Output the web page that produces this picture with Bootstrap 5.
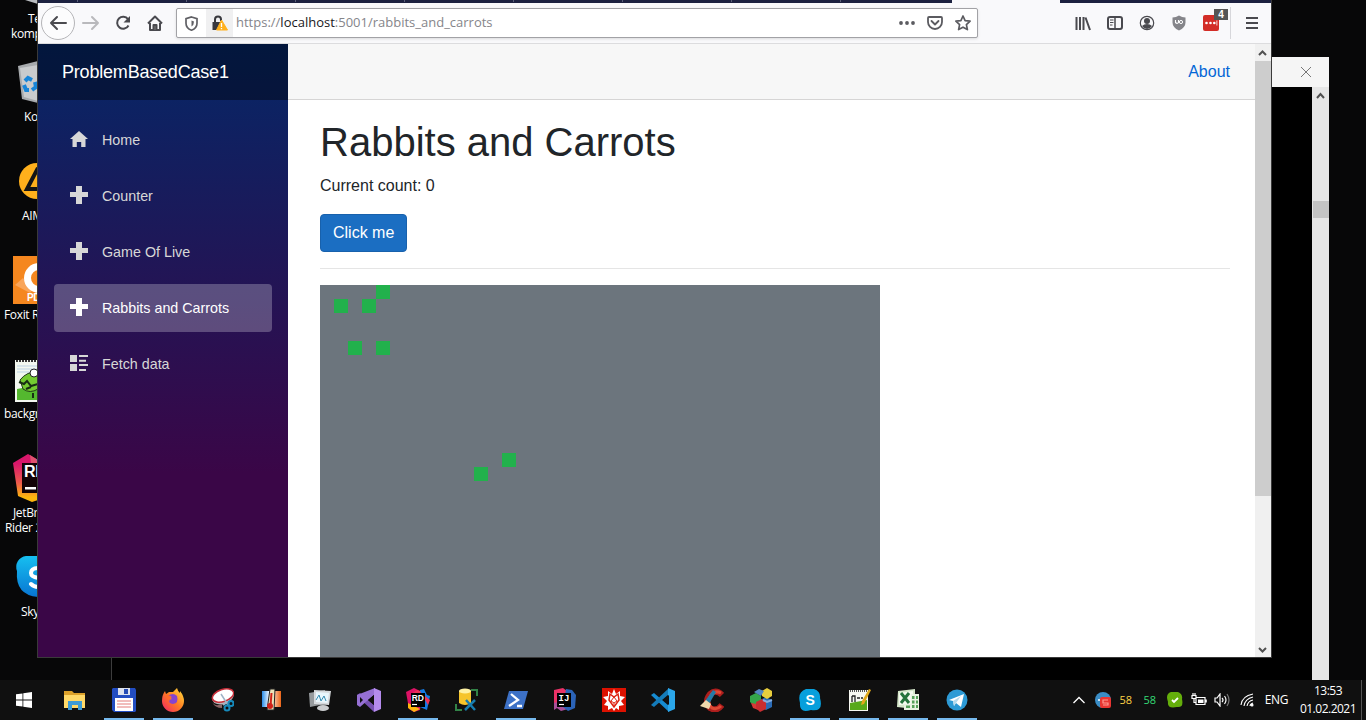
<!DOCTYPE html>
<html lang="en">
<head>
<meta charset="utf-8">
<meta name="viewport" content="width=device-width, initial-scale=1">
<title>ProblemBasedCase1</title>
<link href="https://cdn.jsdelivr.net/npm/bootstrap@5.3.0/dist/css/bootstrap.min.css" rel="stylesheet">
<style>
body{width:1366px;height:720px;background:#060607;font-family:"Liberation Sans",Arial,sans-serif;color:#212529;letter-spacing:0}
svg{display:block;flex:none}
.ui-font{font-family:"Open Sans","Noto Sans",sans-serif}
.desk{height:680px;background:#070708}
/* desktop shortcuts */
.shortcuts{width:38px}
.shortcut{height:99px;font-size:12px;line-height:15px;color:#fff;white-space:nowrap;letter-spacing:-.35px}
.shortcut.cut{height:58px}
.shortcut svg{margin-bottom:3px}
/* console window behind the browser */
.console{left:111px;top:57px;width:1218px;height:623px;background:#000;border-left:1px solid #3c3c3c}
.console-title{height:30px;background:#f5f5f5;padding-right:17px}
.console-scroll{width:17px;background:#e6e6e6}
.console-thumb{height:17px;margin:98px 0 0 1px;background:#c4c4c4}
/* browser */
.browser{left:37px;top:0;width:1235px;height:658px;border:1px solid #3a3a3a;border-top:0;background:#fff}
.tabstrip{height:3px;background:#1c2140;flex:none}
.tabstrip i{width:109px;height:2px;border-right:1px solid #5a5e78}
.tabstrip .first{width:40px}
.tabstrip .current{width:108px;height:3px;background:#f9f9fb;border:0}
.toolbar{height:41px;flex:none;background:#f9f9fb;border-bottom:1px solid #dcdcde}
.back{width:34px;height:34px;border:1px solid #b5b5b8;border-radius:50%;background:#fcfcfd;margin-left:3px}
.urlbar{width:802px;height:30px;border:1px solid #a2a2a6;border-radius:2px;background:#fff;box-shadow:0 1px 3px rgba(0,0,0,.12);font-size:13px;color:#85858a}
.lockbox{width:27px;height:28px;background:#f0f0f1;margin-right:3px}
.urlbar b{font-weight:400;color:#18181b}
.sep{width:1px;height:32px;background:#d7d7db}
.count{left:11px;top:-6px;width:14px;height:11px;background:#555;color:#fff;font:bold 10px/11px "Liberation Sans",sans-serif}
/* page */
.sidebar{width:250px;background:linear-gradient(180deg,#052767 0%,#3a0647 70%)}
.brand-row{height:56px;background:rgba(0,0,0,.4);color:#fff;font-size:18px;letter-spacing:-.2px;padding-left:24px}
.side-link{height:48px;border-radius:4px;color:#d7d7d7;font-size:14.3px;padding:2px 0 0 16px;text-decoration:none}
.side-link svg{margin:-5px 14px 0 0}
.side-link.active{background:rgba(255,255,255,.25);color:#fff}
.top-row{height:56px;background:#f7f7f7;border-bottom:1px solid #d6d5d5;padding-right:25px}
.about{color:#0366d6;text-decoration:none}
.article{padding:17.6px 25px 0 32px}
.article h1{font-size:40px}
.btn-click{background:#1b6ec2;border-color:#1861ac;color:#fff;border-radius:4px}
.board{width:560px;height:560px;display:grid;grid-template:repeat(40,14px)/repeat(40,14px);background:#6c757d}
.board i{background:#22b14c}
.scroller{width:16px;background:#f0f0f0}
.thumb{height:435px;background:#cdcdcd}
/* taskbar */
.taskbar{height:40px;background:#101010;color:#fff}
.task{width:49px;height:40px;padding-right:1px}
.start{width:48px;height:40px;margin-right:3px}
.task.open::after{content:"";position:absolute;left:4px;bottom:0;width:40px;height:2px;background:#76b9ed}
.tray{font-size:12px;margin-left:auto}
.clock{width:62px;line-height:18px;letter-spacing:-.5px}
.temp{font-size:11px;width:24px;text-align:center}
</style>
</head>
<body class="overflow-hidden">
<div class="desk position-relative overflow-hidden">
  <div class="shortcuts ui-font overflow-hidden">
    <div class="shortcut cut"><svg width="38" height="8"><path d="M25 0h13v4z" fill="#b9bcc0"/></svg><div style="padding-left:28px">Te</div><div style="padding-left:11px">komp</div></div>
    <div class="shortcut"><svg width="38" height="48"><path d="M18 8l20-5v42l-16-4z" fill="#a7aaad"/><path d="M20 10l18-3v36l-14-4z" fill="#c9cbcd"/><g fill="none" stroke="#1885d8" stroke-width="4"><path d="M25 23l3-3 4 2M24 27l2 5h3M35 24l1 5-4 3"/></g></svg><div style="padding-left:24px">Ko</div></div>
    <div class="shortcut"><svg width="38" height="48"><circle cx="37" cy="24" r="18" fill="#ffb01c"/><path d="M38 11L27 32h11" fill="none" stroke="#151515" stroke-width="4"/></svg><div style="padding-left:22px">AIM</div></div>
    <div class="shortcut"><svg width="38" height="48"><path d="M13 0h25v48H13z" fill="#f5871f"/><path d="M15 29l8-7 10 12-3 3z" fill="#f9a55a"/><circle cx="39" cy="22" r="11.500" fill="none" stroke="#fff" stroke-width="7"/><text x="27" y="45" font-family="Liberation Sans" font-weight="bold" font-size="10" fill="#fff">PD</text></svg><div style="padding-left:4px">Foxit R</div></div>
    <div class="shortcut"><svg width="38" height="48"><path d="M15 5h23v42H15z" fill="#f3f8f0"/><path d="M16 6h22" stroke="#333" stroke-width="2" stroke-dasharray="2 1"/><path d="M17 11h21M17 14h21M17 17h21" stroke="#bdd3e5"/><path d="M17 34l21-4v15H17z" fill="#54b82f"/><path d="M20 25q7-9 18-8v17q-8 5-15 0z" fill="#74cb31" stroke="#203a18"/><circle cx="34" cy="18" r="4" fill="#fff" stroke="#222"/><path d="M19 27l5 2 3-3 4 5 7-2M26 34l5-2M33 38v5" fill="none" stroke="#182d13" stroke-width="2"/></svg><div style="padding-left:4px">backgr</div></div>
    <div class="shortcut"><svg width="38" height="48"><defs><linearGradient id="rider" x1="0" y1="0" x2="0" y2="1"><stop offset=".2" stop-color="#d8176b"/><stop offset=".6" stop-color="#ed5a4c"/><stop offset=".9" stop-color="#fdb60d"/></linearGradient></defs><path d="M13 9L28 0l10 6v40l-6 2-14-6z" fill="url(#rider)"/><path d="M30 1l8 5v7l-7-4z" fill="#e0526e"/><path d="M36 5l2 1v3z" fill="#725fe0"/><path d="M22 9h16v30H22z" fill="#130306"/><text x="24" y="23" font-family="Liberation Sans" font-weight="bold" font-size="16" fill="#fff">RD</text><path d="M25 33h11v2.500H25z" fill="#fff"/></svg><div style="padding-left:13px">JetBr</div><div style="padding-left:5px">Rider 2</div></div>
    <div class="shortcut"><svg width="38" height="48"><defs><linearGradient id="sky" x1="0" y1="0" x2="0" y2="1"><stop stop-color="#16bff0"/><stop offset="1" stop-color="#0875d2"/></linearGradient></defs><path d="M38 3h-12a11 11 0 00-9 15q-2 24 21 26z" fill="url(#sky)"/><path d="M39 15q-8 0-8 5 0 4 8 5M31 31q3 3 8 3" fill="none" stroke="#fff" stroke-width="4" stroke-linecap="round"/></svg><div style="padding-left:21px">Sky</div></div>
  </div>

  <div class="console position-absolute d-flex flex-column">
    <div class="console-title d-flex align-items-center justify-content-end"><svg width="12" height="12" fill="none" stroke="#777"><path d="M1 1l10 10M11 1L1 11"/></svg></div>
    <div class="flex-fill d-flex justify-content-end"><div class="console-scroll"><svg width="17" height="16" fill="none" stroke="#505050" stroke-width="2"><path d="M5 11l3.500-4 3.500 4"/></svg><div class="console-thumb"></div></div></div>
  </div>

  <div class="browser position-absolute d-flex flex-column">
    <div class="tabstrip d-flex"><i class="first"></i><i></i><i></i><i></i><i></i><i></i><i></i><i></i><i style="width:111px;border:0"></i><i class="current"></i></div>
    <div class="toolbar d-flex align-items-center">
      <div class="back d-flex align-items-center justify-content-center"><svg width="18" height="16" fill="none" stroke="#4a4a4f" stroke-width="2" stroke-linecap="round" stroke-linejoin="round"><path d="M17 8H2M8 2L2 8l6 6"/></svg></div>
      <svg style="margin-left:7px" width="18" height="16" fill="none" stroke="#b9b9bc" stroke-width="2" stroke-linecap="round" stroke-linejoin="round"><path d="M1 8h15M10 2l6 6-6 6"/></svg>
      <svg style="margin-left:15px" width="16" height="16" fill="none" stroke="#4a4a4f" stroke-width="2"><path d="M13.500 10.500A6 6 0 1113 4.200"/><path d="M15 1v6.500H8.500z" fill="#4a4a4f" stroke="none"/></svg>
      <svg style="margin-left:16px" width="16" height="16" fill="none" stroke="#4a4a4f" stroke-width="2" stroke-linejoin="round"><path d="M1 8.500L8 1.500l7 7M3 8v7h10V8"/><path d="M6.500 15v-5h3v5" fill="#777"/></svg>
      <div class="urlbar ui-font d-flex align-items-center" style="margin-left:13px">
        <svg style="margin:0 8px 0 8px" width="13" height="15" fill="none" stroke="#606065" stroke-width="1.700"><path d="M6.500 1l5.500 1.700v4.500q0 5-5.500 7-5.500-2-5.500-7V2.700z"/><path d="M6.500 4.500v6q2.500-1.500 2.500-5z" fill="#606065" stroke="none"/></svg>
        <div class="lockbox d-flex align-items-center justify-content-center" ><svg width="17" height="17"><path d="M4 8V4.500a3 3 0 016 0V6" fill="none" stroke="#38383d" stroke-width="2"/><path d="M1.500 7h9v8h-9z" fill="#38383d"/><path d="M10.500 5L16.500 15h-11z" fill="#ffb01d" stroke="#ffb01d" stroke-linejoin="round"/><path d="M10.500 8v4M10.500 13v1.200" stroke="#fff" stroke-width="1.300"/></svg></div>
        <span class="url-text">https://<b>localhost</b>:5001/rabbits_and_carrots</span>
        <svg class="ms-auto" width="16" height="4" fill="#5b5b60"><circle cx="2" cy="2" r="1.900"/><circle cx="8" cy="2" r="1.900"/><circle cx="14" cy="2" r="1.900"/></svg>
        <svg style="margin-left:12px" width="16" height="14" fill="none" stroke="#5b5b60" stroke-width="1.800" stroke-linecap="round" stroke-linejoin="round"><path d="M2 1h12q1 0 1 1v4a7 7 0 01-14 0V2q0-1 1-1zM4.500 5L8 8.500 11.500 5"/></svg>
        <svg style="margin:0 6px 0 12px" width="16" height="16" fill="none" stroke="#5b5b60" stroke-width="1.700" stroke-linejoin="round"><path d="M8 1l2.100 4.600 5 .6-3.700 3.400 1 5L8 12.200 3.600 14.600l1-5L.9 6.200l5-.6z"/></svg>
      </div>
      <svg style="margin-left:97px" width="16" height="15" fill="none" stroke="#4a4a4f" stroke-width="2"><path d="M1.500 1v13M5 1v13M8.500 1v13M10.500 1.500l4.500 12.500"/></svg>
      <svg style="margin-left:16px" width="16" height="14" fill="none" stroke="#4a4a4f" stroke-width="2"><rect x="1" y="1" width="14" height="12" rx="2"/><path d="M8 1v12" stroke-width="1.500"/><path d="M3 4h3.500M3 6.500h3.500M3 9h2.500" stroke-width="1"/></svg>
      <svg style="margin-left:16px" width="16" height="16"><circle cx="8" cy="8" r="6.700" fill="none" stroke="#4a4a4f" stroke-width="1.200"/><circle cx="8" cy="6" r="3" fill="#4a4a4f"/><path d="M3 11q2-2 5-2t5 2q-2 3-5 3t-5-3z" fill="#4a4a4f"/></svg>
      <svg style="margin-left:16px" width="16" height="16"><path d="M8 .5q3 2 6.500 2v5q0 5-6.500 8-6.500-3-6.500-8v-5q3.500 0 6.500-2z" fill="#85858a"/><path d="M4.500 5v2.500q1.700 1.800 3 0V5" fill="none" stroke="#fff" stroke-width="1.100"/><circle cx="10" cy="7" r="1.600" fill="none" stroke="#fff"/></svg>
      <div class="position-relative" style="margin-left:16px"><svg width="16" height="16"><rect width="16" height="16" rx="2" fill="#d32d27"/><g fill="#fff"><circle cx="3.500" cy="8" r="1.300"/><circle cx="7.500" cy="8" r="1.300"/><circle cx="11.300" cy="8" r="1.300"/><path d="M13.500 5.500h.8v5h-.8z"/></g></svg><span class="count position-absolute text-center">4</span></div>
      <div class="sep" style="margin-left:11px"></div>
      <svg style="margin-left:15px" width="12" height="12" stroke="#4a4a4f" stroke-width="2"><path d="M0 1h12M0 6h12M0 11h12"/></svg>
    </div>
    <div class="d-flex flex-fill overflow-hidden" style="min-height:0">
      <nav class="sidebar flex-shrink-0">
        <div class="brand-row d-flex align-items-center">ProblemBasedCase1</div>
        <div class="d-flex flex-column gap-2 px-3 pt-3">
          <a class="side-link d-flex align-items-center" href="#"><svg width="18" height="18" fill="currentColor"><path d="M9 1L0 9h2.500v8h4.300v-5h4.400v5h4.300V9H18z"/></svg>Home</a>
          <a class="side-link d-flex align-items-center" href="#"><svg width="18" height="18" fill="currentColor"><path d="M6 0h6v6h6v5h-6v7H6v-7H0V6h6z"/></svg>Counter</a>
          <a class="side-link d-flex align-items-center" href="#"><svg width="18" height="18" fill="currentColor"><path d="M6 0h6v6h6v5h-6v7H6v-7H0V6h6z"/></svg>Game Of Live</a>
          <a class="side-link active d-flex align-items-center" href="#"><svg width="18" height="18" fill="currentColor"><path d="M6 0h6v6h6v5h-6v7H6v-7H0V6h6z"/></svg>Rabbits and Carrots</a>
          <a class="side-link d-flex align-items-center" href="#"><svg width="18" height="18" fill="currentColor"><path d="M0 1h7v7H0zM0 10h7v7H0zM9 1h9v2H9zM9 5.700h7v2H9zM9 10h9v2H9zM9 15h7v2H9z"/></svg>Fetch data</a>
        </div>
      </nav>
      <main class="flex-fill overflow-hidden">
        <div class="top-row d-flex align-items-center justify-content-end"><a class="about" href="#">About</a></div>
        <div class="article">
          <h1 class="mb-2">Rabbits and Carrots</h1>
          <p class="mb-3">Current count: 0</p>
          <button class="btn btn-click">Click me</button>
          <hr class="my-3" style="opacity:.1;border-color:#000">
          <div class="board">
            <i style="grid-area:1/5"></i><i style="grid-area:2/2"></i><i style="grid-area:2/4"></i><i style="grid-area:5/3"></i><i style="grid-area:5/5"></i><i style="grid-area:13/14"></i><i style="grid-area:14/12"></i>
          </div>
        </div>
      </main>
      <div class="scroller d-flex flex-column flex-shrink-0">
        <svg width="16" height="17" fill="none" stroke="#505050" stroke-width="2"><path d="M4 11l3.500-3.500L11 11"/></svg>
        <div class="thumb"></div>
        <svg class="mt-auto" width="16" height="17" fill="none" stroke="#505050" stroke-width="2"><path d="M4 8l3.500 3.500L11 8"/></svg>
      </div>
    </div>
  </div>
</div>

<div class="taskbar d-flex ui-font">
  <div class="start d-flex align-items-center justify-content-center"><svg width="16" height="16" fill="#fff"><path d="M0 2.300l6.500-.9v6.200H0zM7.300 1.300L16 0v7.600H7.300zM0 8.400h6.500v6.200L0 13.700zM7.300 8.400H16V16l-8.700-1.300z"/></svg></div>
  <div class="task d-flex align-items-center justify-content-center"><svg width="24" height="24"><path d="M1 3h8l2 2h11v15H1z" fill="#dca12a"/><path d="M1 7h21v13H1z" fill="#ffd968"/><path d="M5 13h14v9h-4v-5H9v5H5z" fill="#3c9bd6"/></svg></div>
  <div class="task open position-relative d-flex align-items-center justify-content-center"><svg width="24" height="24"><path d="M0 1l1-1h22l1 2v21l-1 1H2l-2-2z" fill="#224dc2"/><path d="M6 0h12v7H6z" fill="#dce2ef"/><path d="M12 1h4v5h-4z" fill="#244bb5"/><path d="M3 10h18v13H3z" fill="#fff"/><path d="M5 13h14M5 16h14M5 19h14" stroke="#e37a79"/></svg></div>
  <div class="task open position-relative d-flex align-items-center justify-content-center"><svg width="24" height="24"><defs><linearGradient id="fox" x1="1" y1="0" x2="0" y2="1"><stop stop-color="#ffe43d"/><stop offset=".5" stop-color="#ff7a22"/><stop offset="1" stop-color="#f0206b"/></linearGradient></defs><path d="M12 4l4-4q1 4 3 5V3q4 5 4 10a11 11 0 01-22 0Q1 7 4 3l1 3 3-2z" fill="url(#fox)"/><path d="M7 8q5-4 9 0 2 7-4 8-5-1-4-4l3-1z" fill="#8544cf"/><path d="M4 8q4-2 7 1l-3 2 1 3" fill="#ff6b2b"/></svg></div>
  <div class="task d-flex align-items-center justify-content-center"><svg width="24" height="24"><ellipse cx="13" cy="9" rx="11" ry="7" transform="rotate(-18 13 9)" fill="#b7b7bb"/><ellipse cx="13" cy="7.500" rx="11" ry="6" transform="rotate(-18 13 7.500)" fill="#fff" stroke="#c72e39" stroke-width="1.500"/><path d="M2 14q3 5 10 2v4q-7 0-10-6z" fill="#866"/><path d="M11 6l7 11M21 12l-8 5" stroke="#9eb3c6" stroke-width="1.500"/><circle cx="17" cy="20" r="2.500" fill="none" stroke="#168abb" stroke-width="2"/><circle cx="21" cy="15.500" r="2.500" fill="none" stroke="#168abb" stroke-width="2"/></svg></div>
  <div class="task d-flex align-items-center justify-content-center"><svg width="24" height="24"><defs><linearGradient id="heat"><stop stop-color="#2b8ee8"/><stop offset=".4" stop-color="#fff"/><stop offset="1" stop-color="#ed6517"/></linearGradient></defs><path d="M3 3h19v16H3z" fill="url(#heat)"/><path d="M11 1h5l-1 21H8z" fill="#ece3b9" stroke="#222"/><path d="M12.500 5l-1 13" stroke="#d12118" stroke-width="2"/><circle cx="11" cy="18" r="3" fill="#d12118"/></svg></div>
  <div class="task d-flex align-items-center justify-content-center"><svg width="24" height="24"><path d="M1 5l16-3v14L2 19z" fill="#969a9d"/><path d="M6 2l17 1-2 14-15-1z" fill="#d7dadd"/><path d="M8 4l13 1-1.500 10L8 14z" fill="#e9f6fc"/><path d="M8 12l3-5 2 6 3-5 2 5" fill="none" stroke="#368bb1"/><ellipse cx="15" cy="20" rx="6" ry="3" fill="#cbcdcf"/></svg></div>
  <div class="task d-flex align-items-center justify-content-center"><svg width="24" height="24"><path d="M0 7l3-2 15 13-1 6L0 8z" fill="#7551b0"/><path d="M0 7v10l3 2L18 6V0z" fill="#9670d4"/><path d="M3 9v6l3-3z" fill="#101010"/><path d="M17 0l7 3v18l-7 3z" fill="#b48bed"/><path d="M17 7v10l-6-5z" fill="#101010"/></svg></div>
  <div class="task open position-relative d-flex align-items-center justify-content-center"><svg width="24" height="24"><path d="M0 4l8-4 8 4-2 18-6 2-5-3z" fill="#dd1265"/><path d="M14 2l4-1 3 6 3 1-3 14-7-3z" fill="#147be5"/><path d="M2 15l12 6-6 3-6-4z" fill="#fdb60d"/><path d="M14 3l-3-1-6 4 14 2 5 4-2 5z" fill="#ee3157"/><path d="M5 5h14v14H5z"/><text x="5.700" y="12.500" font-family="Liberation Sans" font-weight="bold" font-size="8.500" fill="#fff">RD</text><path d="M6 16.500h5" stroke="#fff" stroke-width="1.200"/></svg></div>
  <div class="task d-flex align-items-center justify-content-center"><svg width="24" height="24"><path d="M4 3v12q6 4 12 0V3z" fill="#f6c52b"/><ellipse cx="10" cy="3" rx="6" ry="2.500" fill="#fff2a3"/><path d="M16 2h6v6M7 22H1v-6" fill="none" stroke="#328347" stroke-width="2"/><path d="M11 12l9 10M20 12L10 22" stroke="#167db0" stroke-width="2.500"/></svg></div>
  <div class="task open position-relative d-flex align-items-center justify-content-center"><svg width="24" height="24"><path d="M5 3h19l-5 18H0z" fill="#3d71c6"/><path d="M7 6l7 6-9 6M13 18h5" fill="none" stroke="#fff" stroke-width="2.300"/></svg></div>
  <div class="task d-flex align-items-center justify-content-center"><svg width="24" height="24"><path d="M1 2l9-2 4 3-6 17-7-3z" fill="#e93267"/><path d="M1 15l7-2 7 8-7 2-4-3-3 2z" fill="#a94f9a"/><path d="M13 1l6 1 4 5-1 13-7 3-5-4z" fill="#2b63b7"/><path d="M4 5h14v14H4z"/><text x="5.500" y="12.500" font-family="Liberation Mono" font-weight="bold" font-size="9" fill="#fff">IJ</text><path d="M6 16.500h5" stroke="#fff" stroke-width="1.200"/></svg></div>
  <div class="task d-flex align-items-center justify-content-center"><svg width="24" height="24"><path d="M0 0h24v24H0z" fill="#dd1100"/><path d="M12 1l2 5 4-3v5l5 1-4 4 3 4-5 1v4l-3-2-2 3-2-3-4 2v-4l-4-1 3-4-4-4 5-1V3l4 3z" fill="#fff"/><path d="M8 6l4 3 4-3 1 6-5 7-5-7z" fill="none" stroke="#d21" stroke-width="1.500"/><path d="M12 9l-3 4 3 2 3-2zM12 15v4" fill="none" stroke="#d21"/></svg></div>
  <div class="task d-flex align-items-center justify-content-center"><svg width="24" height="24"><path d="M0 7l3-2 15 13v6z" fill="#168bd1"/><path d="M0 17l3 2L18 6V0z" fill="#147bb9"/><path d="M17 0l7 3v18l-7 3z" fill="#2ba6ea"/><path d="M18 7v10l-6-5z" fill="#101010"/></svg></div>
  <div class="task d-flex align-items-center justify-content-center"><svg width="24" height="24"><path d="M22 7q-6-6-12-1-6 8 0 14 7 4 12-3" fill="none" stroke="#ac1e1d" stroke-width="6"/><path d="M21 5q-6-3-10 2-5 8 1 13 5 2 9-2" fill="none" stroke="#df4934" stroke-width="3"/><path d="M13 2l3 2-7 12-4-3z" fill="#257ba7"/><path d="M6 12l5 4-2 5-9-3z" fill="#efd9ad"/></svg></div>
  <div class="task d-flex align-items-center justify-content-center"><svg width="24" height="24"><path d="M1 8l6-3 5 3v7l-6 3-5-4z" fill="#34a64b"/><path d="M2 15l6 1 4 7-8-3z" fill="#d83937"/><path d="M11 12l6-3 6 3v7l-6 3-6-3z" fill="#2b6cb7"/><path d="M13 3l5-3 5 3v5l-5 3-5-3z" fill="#e9ce3d"/><path d="M5 4l5-3 5 2-3 5z" fill="#5488c3"/><path d="M7 14l6-3 4 3v7l-6 3-4-4z" fill="#c92d31"/><path d="M14 12l4 2 5-2" fill="none" stroke="#87aee0" stroke-width="2"/></svg></div>
  <div class="task open position-relative d-flex align-items-center justify-content-center"><svg width="24" height="24"><path d="M8 1h8a8 8 0 016 9q4 14-9 12-12 4-11-7Q-1 4 8 1z" fill="#079fdc"/><text x="7.500" y="17" font-family="Liberation Sans" font-weight="bold" font-size="14" fill="#fff">S</text></svg></div>
  <div class="task open position-relative d-flex align-items-center justify-content-center"><svg width="24" height="24"><path d="M2 2h19v21H2z" fill="#f7f8f2"/><path d="M3 3h17" stroke="#555" stroke-width="2" stroke-dasharray="1 1"/><path d="M3 15l17-3v10H3z" fill="#58a91a"/><path d="M5 8v6M5 8h3v6M10 10h3M14 10h2" fill="none" stroke="#222" stroke-width="1.300"/><path d="M22 1l2 1-7 14-3 1 1-4z" fill="#e1a91b"/></svg></div>
  <div class="task open position-relative d-flex align-items-center justify-content-center"><svg width="24" height="24"><path d="M2 3l17-2v20l-18-2z" fill="#d4e6c9"/><path d="M3 5l14-2v13l-14 1z" fill="#f4faef"/><path d="M5 5l8 10M13 5L5 15" stroke="#25733b" stroke-width="3"/><path d="M15 6h8v16H8v-6h7z" fill="#e9f2e1"/><path d="M16 8h2.500v3H16zM20 8h2v3h-2zM16 12.500h2.500v3H16zM20 12.500h2v3h-2zM16 17h2.500v3H16zM20 17h2v3h-2zM10 17.500h4v2.500h-4z" fill="#56a05a"/></svg></div>
  <div class="task open position-relative d-flex align-items-center justify-content-center"><svg width="24" height="24"><circle cx="12" cy="12" r="10.500" fill="#2d9ad5"/><path d="M4 12l15-6-3 13-5-4-2 3-1-5z" fill="#fff"/><path d="M8 13l8-5-5 7-2 3z" fill="#b8dbed"/></svg></div>

  <div class="tray d-flex align-items-center">
    <svg width="12" height="8" fill="none" stroke="#fff" stroke-width="1.300"><path d="M.5 7L6 1.500 11.500 7"/></svg>
    <svg style="margin-left:10px" width="16" height="16"><circle cx="8" cy="8" r="8" fill="#3a8dc6"/><circle cx="4" cy="8" r="1" fill="#fff"/><rect x="5" y="5" width="11" height="11" rx="2" fill="#e93532"/><path d="M13 8H8v3h5v2H8" fill="none" stroke="#ff9b91" stroke-width="1.200"/></svg>
    <span class="temp" style="color:#ffd447;margin-left:3px">58</span><span class="temp" style="color:#35dc76">58</span>
    <svg style="margin-left:5px" width="16" height="16"><path d="M4 0h7q5 2 4 7 2 9-5 8-10 2-9-5-3-8 3-10z" fill="#64ae0b"/><path d="M5 8l2 2 4-4" fill="none" stroke="#fff" stroke-width="1.800"/></svg>
    <svg style="margin-left:8px" width="16" height="14" fill="none" stroke="#fff" stroke-width="1.200"><path d="M5 4.500h9v7H5zM15.200 6.500v3M1 2.500v3h4v-3zM2 0v2M4 0v2M3 5.500v4h2"/><path d="M7 6.500h5.500v3.500H7z" fill="#fff" stroke="none"/></svg>
    <svg style="margin-left:7px" width="17" height="14" fill="none" stroke="#fff" stroke-width="1.200"><path d="M1 5h2l3-4v12L3 9H1zM8 5q2 2 0 4M10.500 3q3 4 0 8"/><path d="M13 1q4 6 0 12" stroke="#777"/></svg>
    <svg style="margin-left:9px" width="15" height="14" fill="none" stroke="#fff" stroke-width="1.100"><path d="M1 12Q2 3 13 1M4 13Q5 6 13 4M7 13q1-5 6-6M10 13q0-2 3-3"/><circle cx="12" cy="12" r="1" fill="#fff"/></svg>
    <span style="margin-left:10px;letter-spacing:-.4px">ENG</span>
    <div class="clock text-center" style="margin-left:9px"><div>13:53</div><div>01.02.2021</div></div>
    <div style="width:1px;height:40px;background:#555;margin:0 4px 0 2px"></div>
  </div>
</div>
<script src="https://cdn.jsdelivr.net/npm/bootstrap@5.3.0/dist/js/bootstrap.bundle.min.js"></script>
</body>
</html>
